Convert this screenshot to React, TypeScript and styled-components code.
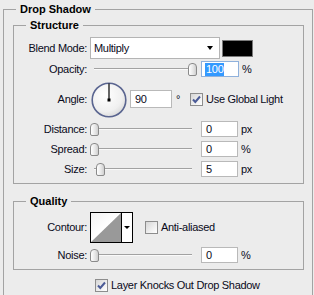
import React from "react";
import styled, { createGlobalStyle } from "styled-components";

const Global = createGlobalStyle`
  html, body { margin: 0; padding: 0; background: #ececec; }
  body {
    width: 314px; height: 295px; overflow: hidden;
    font-family: "Liberation Sans", Arial, sans-serif;
    font-size: 11px; color: #0a0a1a;
    letter-spacing: -0.3px;
  }
`;

const Page = styled.div`
  width: 314px;
  height: 295px;
  box-sizing: border-box;
  padding: 3px 1px 0 3px;
  background: #ececec;
  overflow: hidden;
`;

const Group = styled.fieldset<{ $outer?: boolean; $gapTop?: number }>`
  margin: ${(p) => (p.$gapTop ? `${p.$gapTop}px` : "0")} 0 0 0;
  padding: 0;
  min-width: 0;
  border: 1px solid #a3a3a3;
  box-sizing: border-box;
  min-height: ${(p) => (p.$outer ? "330px" : "0")};
`;

const Legend = styled.legend`
  margin-left: 12px;
  padding: 0 4px;
  font-weight: bold;
  font-size: 11px;
  line-height: 13px;
  height: 13px;
  letter-spacing: 0;
  color: #000;
`;

const OuterBody = styled.div`
  display: flex;
  flex-direction: column;
  padding: 3px 8px 0 9px;
`;

const GroupBody = styled.div<{ $pt: number; $pb: number }>`
  display: flex;
  flex-direction: column;
  padding: ${(p) => p.$pt}px 0 ${(p) => p.$pb}px 0;
`;

const Row = styled.div<{ $h: number; $mt?: number }>`
  display: grid;
  grid-template-columns: 73px auto;
  column-gap: 3px;
  align-items: center;
  height: ${(p) => p.$h}px;
  margin-top: ${(p) => p.$mt ?? 0}px;
`;

const Label = styled.span`
  text-align: right;
  white-space: nowrap;
  line-height: 13px;
`;

const Controls = styled.div`
  display: flex;
  align-items: center;
  height: 100%;
`;

const Select = styled.div`
  width: 130px;
  height: 22px;
  box-sizing: border-box;
  border: 1px solid #b4b4b4;
  background: #fff;
  display: flex;
  align-items: center;
  justify-content: space-between;
  padding: 0 6px 0 3px;
  line-height: 13px;
`;

const Arrow = styled.span`
  width: 0;
  height: 0;
  border-left: 3.5px solid transparent;
  border-right: 3.5px solid transparent;
  border-top: 4px solid #000;
`;

const Swatch = styled.div`
  width: 31px;
  height: 17px;
  box-sizing: border-box;
  margin-left: 2px;
  background: #000;
  border: 1px solid #7a7a7a;
`;

const SliderWrap = styled.div`
  position: relative;
  width: 107px;
  height: 13px;
  flex: none;
`;

const Track = styled.div`
  position: absolute;
  left: 4px;
  width: 98px;
  top: 5px;
  height: 1px;
  background: #a2a2a2;
  border-bottom: 1px solid #fafafa;
`;

const Thumb = styled.div`
  position: absolute;
  top: 0;
  width: 9px;
  height: 13px;
  box-sizing: border-box;
  border: 1px solid #8a8a8a;
  border-radius: 4px 4px 2px 2px;
  background: linear-gradient(90deg, #ffffff 0%, #e6e6e6 60%, #cfcfcf 100%);
`;

const Field = styled.div<{ $w: number; $h: number; $focus?: boolean; $ml: number }>`
  width: ${(p) => p.$w}px;
  height: ${(p) => p.$h}px;
  margin-left: ${(p) => p.$ml}px;
  box-sizing: border-box;
  border: 1px solid ${(p) => (p.$focus ? "#8fb1dc" : "#b9b9b9")};
  background: #fff;
  padding-left: 4px;
  display: flex;
  align-items: center;
  line-height: 13px;
  flex: none;
`;

const Selected = styled.span`
  background: #3399ff;
  color: #fff;
  padding: 0 1px;
  margin-left: -1px;
`;

const Unit = styled.span<{ $ml?: number }>`
  margin-left: ${(p) => p.$ml ?? 3}px;
  line-height: 13px;
`;

const Degree = styled.span`
  margin-left: 4px;
  line-height: 13px;
`;

const DialBox = styled.svg`
  margin-left: 1px;
  margin-top: 2px;
  flex: none;
`;

const CheckBox = styled.span<{ $ml: number }>`
  display: inline-flex;
  width: 13px;
  height: 13px;
  box-sizing: border-box;
  margin-left: ${(p) => p.$ml}px;
  border: 1px solid #8d8d8d;
  background: linear-gradient(135deg, #d6d6d6 0%, #f4f4f4 70%, #ffffff 100%);
  flex: none;
`;

const CheckText = styled.span`
  margin-left: 3px;
  line-height: 13px;
  white-space: nowrap;
`;

const ContourBox = styled.div`
  width: 43px;
  height: 31px;
  box-sizing: border-box;
  border: 1px solid #000;
  display: flex;
  background: #fff;
  flex: none;
`;

const ContourPreview = styled.svg`
  display: block;
  flex: none;
`;

const ContourButton = styled.div`
  flex: 1;
  border-left: 1px solid #000;
  display: flex;
  align-items: center;
  justify-content: center;
`;

const SmallArrow = styled.span`
  width: 0;
  height: 0;
  border-left: 3px solid transparent;
  border-right: 3px solid transparent;
  border-top: 3px solid #000;
`;

const Footer = styled.div`
  display: flex;
  align-items: center;
  height: 20px;
  margin-top: 5px;
`;

function Check({ checked = false, ml }: { checked?: boolean; ml: number }) {
  return (
    <CheckBox $ml={ml}>
      {checked && (
        <svg width="11" height="11" viewBox="0 0 11 11">
          <path d="M2 5.5 L4.3 8 L9 2.5" fill="none" stroke="#4b5b97" strokeWidth="2" />
        </svg>
      )}
    </CheckBox>
  );
}

function Slider({ pos }: { pos: number }) {
  return (
    <SliderWrap>
      <Track />
      <Thumb style={{ left: `${pos * 98}px` }} />
    </SliderWrap>
  );
}

function Dial() {
  return (
    <DialBox width="36" height="36" viewBox="0 0 36 36">
      <defs>
        <radialGradient id="dialFill" cx="40%" cy="35%" r="70%">
          <stop offset="0%" stopColor="#ffffff" />
          <stop offset="70%" stopColor="#f0f0f0" />
          <stop offset="100%" stopColor="#d8d8d8" />
        </radialGradient>
      </defs>
      <circle cx="18" cy="18" r="16.8" fill="url(#dialFill)" stroke="#5a6590" strokeWidth="1.6" />
      <line x1="18" y1="1.5" x2="18" y2="18" stroke="#000" strokeWidth="1.2" />
      <rect x="16.5" y="16.5" width="3" height="3" fill="#000" />
    </DialBox>
  );
}

function SliderRow({ label, value, unit, pos, mt }: { label: string; value: string; unit: string; pos: number; mt?: number }) {
  return (
    <Row $h={20} $mt={mt}>
      <Label>{label}</Label>
      <Controls>
        <Slider pos={pos} />
        <Field $w={37} $h={16} $ml={4}>{value}</Field>
        <Unit>{unit}</Unit>
      </Controls>
    </Row>
  );
}

export default function App() {
  return (
    <Page>
      <Global />
      <Group $outer>
        <Legend>Drop Shadow</Legend>
        <OuterBody>
          <Group>
            <Legend>Structure</Legend>
            <GroupBody $pt={5} $pb={4}>
              <Row $h={22}>
                <Label>Blend Mode:</Label>
                <Controls>
                  <Select>
                    <span>Multiply</span>
                    <Arrow />
                  </Select>
                  <Swatch />
                </Controls>
              </Row>
              <Row $h={20}>
                <Label>Opacity:</Label>
                <Controls>
                  <Slider pos={1} />
                  <Field $w={38} $h={16} $ml={4} $focus>
                    <Selected>100</Selected>
                  </Field>
                  <Unit>%</Unit>
                </Controls>
              </Row>
              <Row $h={40}>
                <Label>Angle:</Label>
                <Controls>
                  <Dial />
                  <Field $w={42} $h={18} $ml={3}>90</Field>
                  <Degree>°</Degree>
                  <Check checked ml={10} />
                  <CheckText>Use Global Light</CheckText>
                </Controls>
              </Row>
              <SliderRow label="Distance:" value="0" unit="px" pos={0} />
              <SliderRow label="Spread:" value="0" unit="%" pos={0} />
              <SliderRow label="Size:" value="5" unit="px" pos={0.06} />
            </GroupBody>
          </Group>
          <Group $gapTop={11}>
            <Legend>Quality</Legend>
            <GroupBody $pt={4} $pb={4}>
              <Row $h={31}>
                <Label>Contour:</Label>
                <Controls>
                  <ContourBox>
                    <ContourPreview width="30" height="29" viewBox="0 0 30 29">
                      <defs>
                        <linearGradient id="ctop" x1="0" y1="0" x2="1" y2="1">
                          <stop offset="0%" stopColor="#f2f2f2" />
                          <stop offset="50%" stopColor="#ffffff" />
                        </linearGradient>
                      </defs>
                      <rect x="0" y="0" width="30" height="29" fill="url(#ctop)" />
                      <polygon points="0,29 30,0 30,29" fill="#999999" />
                    </ContourPreview>
                    <ContourButton>
                      <SmallArrow />
                    </ContourButton>
                  </ContourBox>
                  <Check ml={12} />
                  <CheckText>Anti-aliased</CheckText>
                </Controls>
              </Row>
              <SliderRow label="Noise:" value="0" unit="%" pos={0} mt={2} />
            </GroupBody>
          </Group>
          <Footer>
            <Check checked ml={82} />
            <CheckText>Layer Knocks Out Drop Shadow</CheckText>
          </Footer>
        </OuterBody>
      </Group>
    </Page>
  );
}
